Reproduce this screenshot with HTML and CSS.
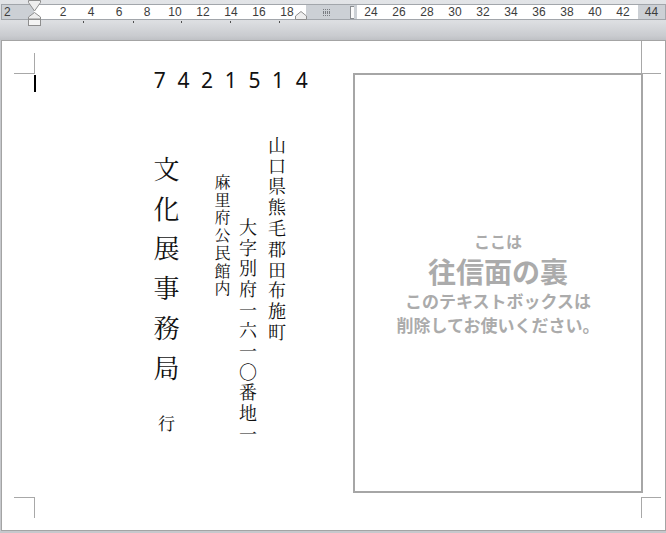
FILE: index.html
```html
<!DOCTYPE html>
<html lang="ja">
<head>
<meta charset="utf-8">
<title>往復はがき</title>
<link rel="stylesheet" href="styles.css">
</head>
<body>
<div class="topbar">
  <div class="ruler">
    <div class="seg gray seg-l"><span class="lnum">2</span></div>
    <div class="seg white seg-a">
      <span class="cell">2</span><span class="cell">4</span><span class="cell">6</span><span class="cell">8</span><span class="cell">10</span><span class="cell">12</span><span class="cell">14</span><span class="cell">16</span><span class="cell">18</span>
    </div>
    <div class="seg gray seg-m">
      <svg class="grid-ico" width="8" height="7" viewBox="0 0 8 7"><path d="M0 0.5H8M0 3.5H8M0 6.5H8M0.5 0V7M2.5 0V7M4.5 0V7M6.5 0V7" stroke="#7a7d82" stroke-width="1" stroke-dasharray="1 1" fill="none"/></svg>
      <span class="col-mark"></span>
    </div>
    <div class="seg white seg-b">
      <span class="cell">24</span><span class="cell">26</span><span class="cell">28</span><span class="cell">30</span><span class="cell">32</span><span class="cell">34</span><span class="cell">36</span><span class="cell">38</span><span class="cell">40</span><span class="cell">42</span>
    </div>
    <div class="seg gray seg-r"><span class="cell">44</span></div>
    <svg class="indent-left" width="13" height="26" viewBox="0 0 13 26">
      <path d="M0.5 0.5H12.5V2.5L6.5 11L0.5 2.5Z" fill="#eeeeee" stroke="#8e8e8e"/>
      <path d="M6.5 12.5L12.5 17V19H0.5V17Z" fill="#eeeeee" stroke="#8e8e8e"/>
      <rect x="0.5" y="19.5" width="12" height="6" fill="#f4f4f4" stroke="#8e8e8e"/>
    </svg>
    <svg class="indent-right" width="12" height="9" viewBox="0 0 12 9">
      <path d="M6 0.5L11.5 5V8.5H0.5V5Z" fill="#eeeeee" stroke="#8e8e8e"/>
    </svg>
  </div>
  <div class="tabs"><span class="tick t1"></span><span class="tick t2"></span><span class="tick t3"></span><span class="tick t4"></span><span class="tick t5"></span></div>
</div>

<div class="page">
  <span class="crop tl-v"></span><span class="crop tl-h"></span>
  <span class="crop bl-v"></span><span class="crop bl-h"></span>
  <span class="crop tr-v"></span><span class="crop tr-h"></span>
  <span class="crop br-v"></span><span class="crop br-h"></span>
  <span class="caret"></span>

  <div class="page-body">
    <div class="addr">
      <div class="zip"><span>7</span><span>4</span><span>2</span><span>1</span><span>5</span><span>1</span><span>4</span></div>
      <div class="cols">
        <div class="col-d">
          <div class="name">文化展事務局</div>
          <div class="yuki">行</div>
        </div>
        <div class="vcol col-c">麻里府公民館内</div>
        <div class="vcol col-b">大字別府一六一〇番地一</div>
        <div class="vcol col-a">山口県熊毛郡田布施町</div>
      </div>
    </div>
    <div class="reply">
      <div class="r1">ここは</div>
      <div class="r2">往信面の裏</div>
      <div class="r3">このテキストボックスは</div>
      <div class="r4">削除してお使いください。</div>
    </div>
  </div>
</div>
</body>
</html>
```

FILE: styles.css
```css
html, body {
  margin: 0;
  padding: 0;
}
body {
  width: 666px;
  height: 533px;
  overflow: hidden;
  background: #c6c8cc;
  font-family: "Noto Sans", "Noto Sans CJK JP", sans-serif;
}

/* ---------- ruler ---------- */
.topbar {
  height: 40px;
  padding-top: 4px;
  box-sizing: border-box;
  background: linear-gradient(#e2e4e7 0px, #dcdee1 22px, #c9cbcf 36px, #bfc1c5 40px);
}
.ruler {
  position: relative;
  margin-left: 1px;
  width: 663px;
  height: 14px;
  border: 1px solid #a2a6ab;
  display: flex;
  font-family: "Liberation Sans", Arial, sans-serif;
  font-size: 12px;
  line-height: 14px;
  color: #3c3c3c;
}
.seg { display: flex; height: 14px; }
.gray { background: #ccd0d5; }
.white { background: #ffffff; }
.seg-l { width: 32px; }
.lnum { padding-left: 2px; }
.seg-a { width: 272px; padding-left: 15px; box-sizing: border-box; }
.seg-m { width: 51px; align-items: center; }
.seg-b { width: 281px; }
.seg-r { width: 27px; justify-content: center; }
.cell { width: 28px; text-align: center; flex: none; }
.seg-r .cell { width: 27px; }
.grid-ico { margin-left: 17px; }
.col-mark {
  margin-left: 19px;
  width: 3px;
  height: 11px;
  background: #fafafa;
  border: 1px solid #8a8d91;
  border-right: none;
}
.indent-left {
  position: absolute;
  left: 26px;
  top: -5px;
}
.indent-right {
  position: absolute;
  left: 293px;
  top: 6px;
}
.tabs {
  display: flex;
  height: 3px;
  margin-top: 1px;
}
.tick { width: 1px; height: 2px; background: #505050; }
.t1 { margin-left: 83px; }
.t2 { margin-left: 49px; }
.t3 { margin-left: 47px; }
.t4 { margin-left: 48px; }
.t5 { margin-left: 48px; }

/* ---------- page ---------- */
.page {
  position: relative;
  margin-left: 1px;
  width: 663px;
  height: 489px;
  background: #ffffff;
  border: 1px solid #a4a4a4;
}
.crop { position: absolute; background: #a8a8a8; }
.tl-v { left: 32px; top: 12px; width: 1px; height: 21px; }
.tl-h { left: 12px; top: 32px; width: 21px; height: 1px; }
.bl-v { left: 32px; top: 456px; width: 1px; height: 21px; }
.bl-h { left: 12px; top: 456px; width: 21px; height: 1px; }
.tr-v { left: 639px; top: 0px; width: 1px; height: 33px; }
.tr-h { left: 639px; top: 32px; width: 20px; height: 1px; }
.br-v { left: 639px; top: 456px; width: 1px; height: 21px; }
.br-h { left: 639px; top: 456px; width: 20px; height: 1px; }
.caret {
  position: absolute;
  left: 32px;
  top: 34px;
  width: 2px;
  height: 17px;
  background: #000;
}

.page-body {
  display: flex;
  padding-top: 26px;
}
.addr { width: 351px; flex: none; }
.zip {
  display: flex;
  margin-left: 146px;
  height: 26px;
  font-family: "Noto Sans", "DejaVu Sans", sans-serif;
  font-size: 21px;
  line-height: 26px;
  color: #111;
}
.zip span { width: 23.65px; text-align: center; flex: none; }

.cols {
  display: flex;
  align-items: flex-start;
  margin-top: 43px;
  padding-left: 149px;
  font-family: "Noto Serif CJK JP", "Noto Sans CJK JP", serif;
  color: #111;
}
.vcol, .name, .yuki {
  writing-mode: vertical-rl;
  white-space: nowrap;
}
.col-d {
  width: 30px;
  display: flex;
  flex-direction: column;
  align-items: center;
  margin-top: 20px;
}
.name {
  width: 30px;
  font-size: 26px;
  line-height: 30px;
  letter-spacing: 13.8px;
}
.yuki {
  width: 30px;
  margin-top: 20px;
  font-size: 17px;
  line-height: 30px;
}
.col-c {
  margin-left: 31px;
  margin-top: 38px;
  width: 20px;
  font-size: 16px;
  line-height: 20px;
  letter-spacing: 1.7px;
}
.col-b {
  margin-left: 5px;
  margin-top: 82px;
  width: 22px;
  font-size: 18px;
  line-height: 22px;
  letter-spacing: 2.7px;
}
.col-a {
  margin-left: 7px;
  margin-top: 0;
  width: 22px;
  font-size: 18px;
  line-height: 22px;
  letter-spacing: 2.8px;
}

.reply {
  margin-top: 6px;
  width: 290px;
  height: 420px;
  box-sizing: border-box;
  border: 2px solid #a6a6a6;
  display: flex;
  flex-direction: column;
  justify-content: center;
  align-items: center;
  padding-bottom: 5px;
  font-family: "Noto Sans CJK JP", sans-serif;
  font-weight: 700;
  color: #ababab;
  white-space: nowrap;
}
.r1 { font-size: 16px; line-height: 28px; }
.r2 { font-size: 28px; line-height: 32px; }
.r3 { font-size: 17px; line-height: 28px; }
.r4 { font-size: 17px; line-height: 20px; }
```
